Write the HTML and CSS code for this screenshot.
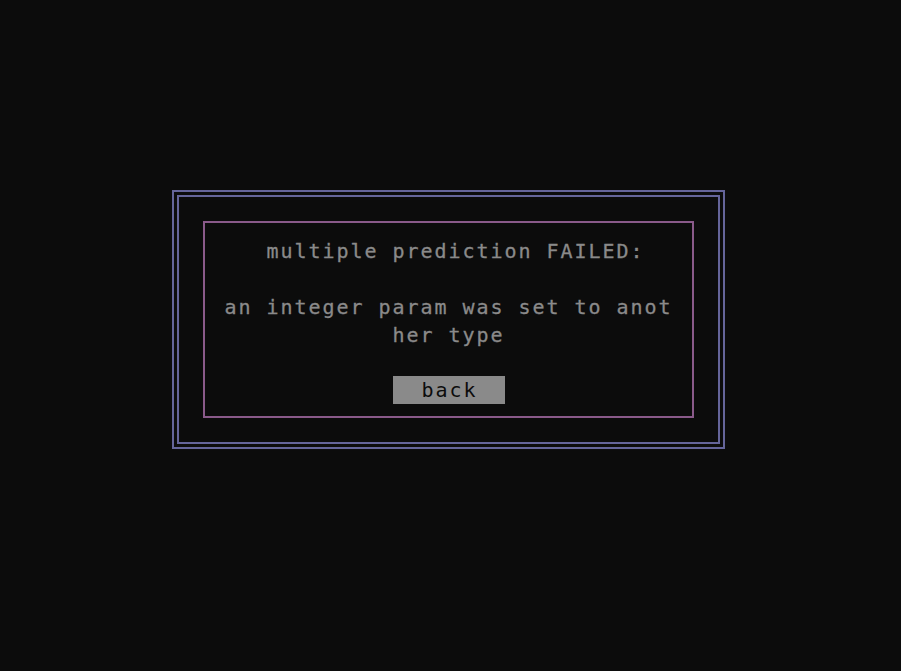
FILE: index.html
```html
<!DOCTYPE html>
<html lang="en">
<head>
<meta charset="utf-8">
<title>multiple prediction FAILED</title>
<link rel="stylesheet" href="styles.css">
</head>
<body>
<main class="screen">
  <div class="frame-outer">
    <div class="frame-inner">
      <section class="dialog">
        <div class="line">&nbsp;multiple prediction FAILED:</div>
        <div class="line">&nbsp;</div>
        <div class="line">an integer param was set to anot</div>
        <div class="line">her type</div>
        <div class="line">&nbsp;</div>
        <div class="actions">
          <button class="btn" type="button">back</button>
        </div>
      </section>
    </div>
  </div>
</main>
</body>
</html>
```

FILE: styles.css
```css
html, body {
  margin: 0;
  padding: 0;
  background: #0c0c0c;
}

.screen {
  width: 901px;
  height: 671px;
  box-sizing: border-box;
  padding: 190px 0 0 172px;
  font-family: "DejaVu Sans Mono", "Liberation Mono", monospace;
  font-size: 20px;
  letter-spacing: 1.96px;
  color: #8a8a8a;
}

.frame-outer {
  display: inline-block;
  border: 2px solid #65659a;
  padding: 3px;
}

.frame-inner {
  border: 2px solid #65659a;
  padding: 24px;
}

.dialog {
  width: 487px;
  border: 2px solid #8a5a8a;
  padding: 14px 0 12px;
  display: flex;
  flex-direction: column;
}

.line {
  height: 28px;
  line-height: 28px;
  text-align: center;
  white-space: pre;
  -webkit-text-stroke: 0.3px #8a8a8a;
}

.actions {
  display: flex;
  justify-content: center;
  margin-top: -1px;
}

.btn {
  width: 112px;
  height: 28px;
  padding: 0 0 0 1.96px;
  margin: 0;
  border: 0;
  background: #8a8a8a;
  color: #0c0c0c;
  font: inherit;
  letter-spacing: inherit;
  line-height: 28px;
  text-align: center;
}
```
